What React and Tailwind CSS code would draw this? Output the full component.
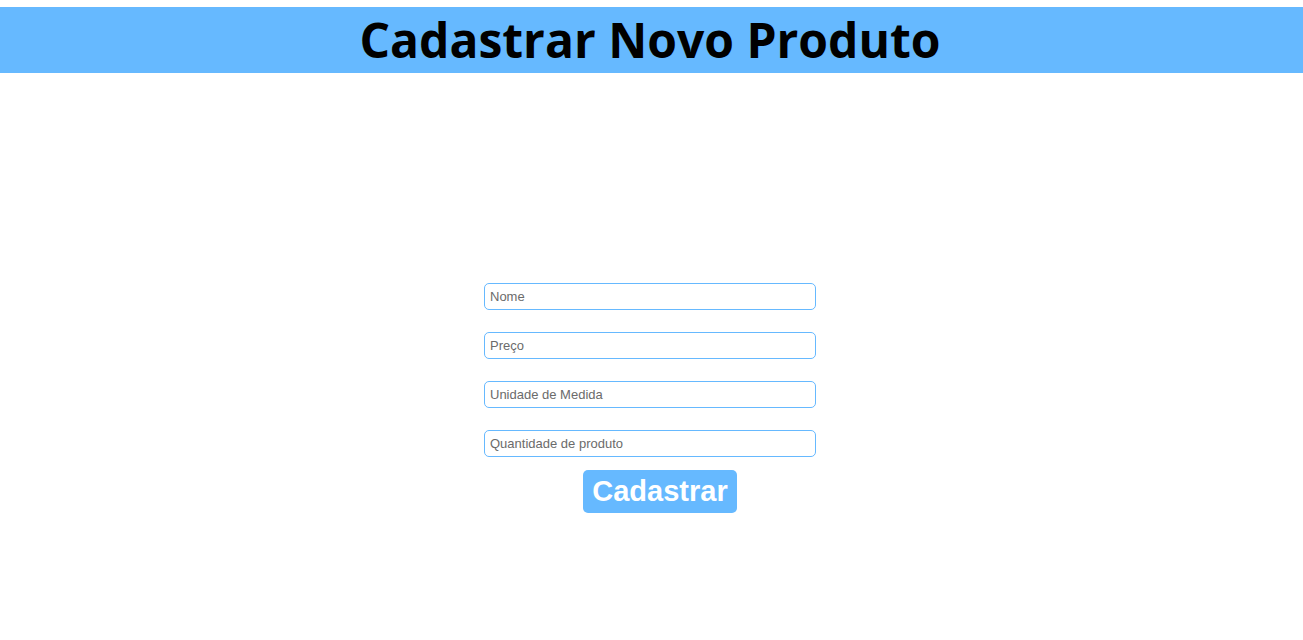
const fields = [
  { id: "nome", label: "Nome" },
  { id: "preco", label: "Preço" },
  { id: "unidade", label: "Unidade de Medida" },
  { id: "quantidade", label: "Quantidade de produto" },
];

export default function App() {
  return (
    <div className="flex min-h-screen flex-col bg-white pt-[7px]">
      <header className="bg-[#66b9ff] pr-[3px] text-center">
        <h1 className="font-['Open_Sans',sans-serif] text-5xl leading-[66px] font-bold text-black">
          Cadastrar Novo Produto
        </h1>
      </header>
      <main className="flex justify-center pt-[210px] pr-[3px] font-['Liberation_Sans',sans-serif]">
        <form className="flex w-[332px] flex-col" onSubmit={(e) => e.preventDefault()}>
          <div className="flex flex-col gap-[22px]">
            {fields.map(({ id, label }) => (
              <input
                key={id}
                id={id}
                name={id}
                type="text"
                aria-label={label}
                placeholder={label}
                className="h-[27px] w-full rounded-[5px] border border-[#66b9ff] px-[5px] text-[13px] text-black placeholder:text-[#6b6b6b]"
              />
            ))}
          </div>
          <button
            type="submit"
            className="mt-[13px] ml-5 self-center rounded-[5px] bg-[#66b9ff] px-[9px] text-[29px] leading-[43px] font-bold text-white"
          >
            Cadastrar
          </button>
        </form>
      </main>
    </div>
  );
}
